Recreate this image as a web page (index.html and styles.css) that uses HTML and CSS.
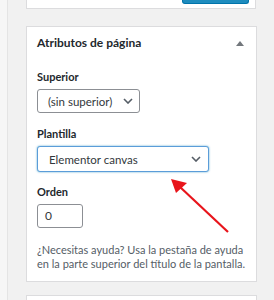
FILE: index.html
```html
<!DOCTYPE html>
<html lang="es">
<head>
    <meta charset="UTF-8">
    <meta name="viewport" content="width=device-width, initial-scale=1.0">
    <title>Atributos de página</title>
    <link rel="stylesheet" href="styles.css">
</head>
<body>
    <div class="edge"></div>
    <div class="column">
        <div class="box box-top">
            <span class="publish-btn"></span>
        </div>

        <div class="box attrs">
            <div class="hndle">
                <h2>Atributos de página</h2>
                <span class="toggle"></span>
            </div>
            <div class="inside">
                <p class="label">Superior</p>
                <div class="select select-parent">
                    <span>(sin superior)</span>
                    <svg width="10" height="6" viewBox="0 0 10 6"><path d="M1 1l4 4 4-4" fill="none" stroke="#555d66" stroke-width="1.6"/></svg>
                </div>

                <p class="label">Plantilla</p>
                <div class="select select-template">
                    <span>Elementor canvas</span>
                    <svg width="10" height="6" viewBox="0 0 10 6"><path d="M1 1l4 4 4-4" fill="none" stroke="#555d66" stroke-width="1.6"/></svg>
                </div>

                <p class="label">Orden</p>
                <div class="number">0</div>

                <p class="help">¿Necesitas ayuda? Usa la pestaña de ayuda en la parte superior del título de la pantalla.</p>
            </div>

            <svg class="arrow" width="70" height="60" viewBox="0 0 70 60">
                <line x1="64" y1="58" x2="16" y2="13" stroke="#e8141b" stroke-width="2.2"/>
                <polygon points="7,5 23,9 12,19" fill="#e8141b"/>
            </svg>
        </div>

        <div class="box box-next"></div>
    </div>
</body>
</html>
```

FILE: styles.css
```css
body {
    margin: 0;
    background-color: #f1f1f1;
    font-family: Lato, "Noto Sans", sans-serif;
    color: #23282d;
    display: flex;
    height: 300px;
    overflow: hidden;
}
.edge {
    width: 7px;
    background-color: #f6f6f6;
    border-right: 1px solid #e4e4e4;
}
.column {
    margin-left: 18px;
    width: 231px;
}
.box {
    background-color: #fff;
    border: 1px solid #dcdcde;
}
.box-top {
    height: 8px;
    border-top: none;
    display: flex;
    justify-content: flex-end;
    margin-right: 1px;
}
.publish-btn {
    width: 65px;
    height: 3px;
    margin-right: 6px;
    background-color: #1e8cbe;
    border: 1px solid #0073aa;
    border-top: none;
    border-radius: 0 0 3px 3px;
}
.attrs {
    margin-top: 17px;
    height: 254px;
    position: relative;
}
.hndle {
    display: flex;
    align-items: center;
    justify-content: space-between;
    padding: 9px 10px 9px 10px;
}
.hndle h2 {
    margin: 0;
    font-size: 12px;
    line-height: 14px;
    font-weight: 700;
}
.toggle {
    width: 0;
    height: 0;
    border-left: 4px solid transparent;
    border-right: 4px solid transparent;
    border-bottom: 5px solid #72777c;
    margin-right: 2px;
}
.inside {
    padding: 11px 10px 0 10px;
}
.label {
    margin: 0 0 5px 0;
    font-size: 11px;
    line-height: 14px;
    font-weight: 700;
}
.select {
    box-sizing: border-box;
    display: flex;
    align-items: center;
    justify-content: space-between;
    border: 1px solid #8c8f94;
    border-radius: 3px;
    font-size: 11.5px;
    color: #32373c;
    background-color: #fff;
}
.select-parent {
    width: 103px;
    height: 24px;
    padding: 0 6px 0 10px;
    margin-bottom: 14px;
}
.select-template {
    width: 172px;
    height: 26px;
    padding: 0 7px 0 11px;
    border-color: #5b9dd9;
    box-shadow: 0 0 2px rgba(30, 140, 190, 0.8);
    margin-bottom: 13px;
}
.number {
    box-sizing: border-box;
    width: 46px;
    height: 24px;
    padding-left: 7px;
    line-height: 22px;
    font-size: 12px;
    color: #32373c;
    border: 1px solid #8c8f94;
    border-radius: 3px;
    margin-bottom: 15px;
}
.help {
    margin: 0;
    font-size: 11px;
    line-height: 14px;
    color: #555d66;
}
.arrow {
    position: absolute;
    left: 137px;
    top: 147px;
}
.box-next {
    margin-top: 13px;
    height: 4px;
}
```
